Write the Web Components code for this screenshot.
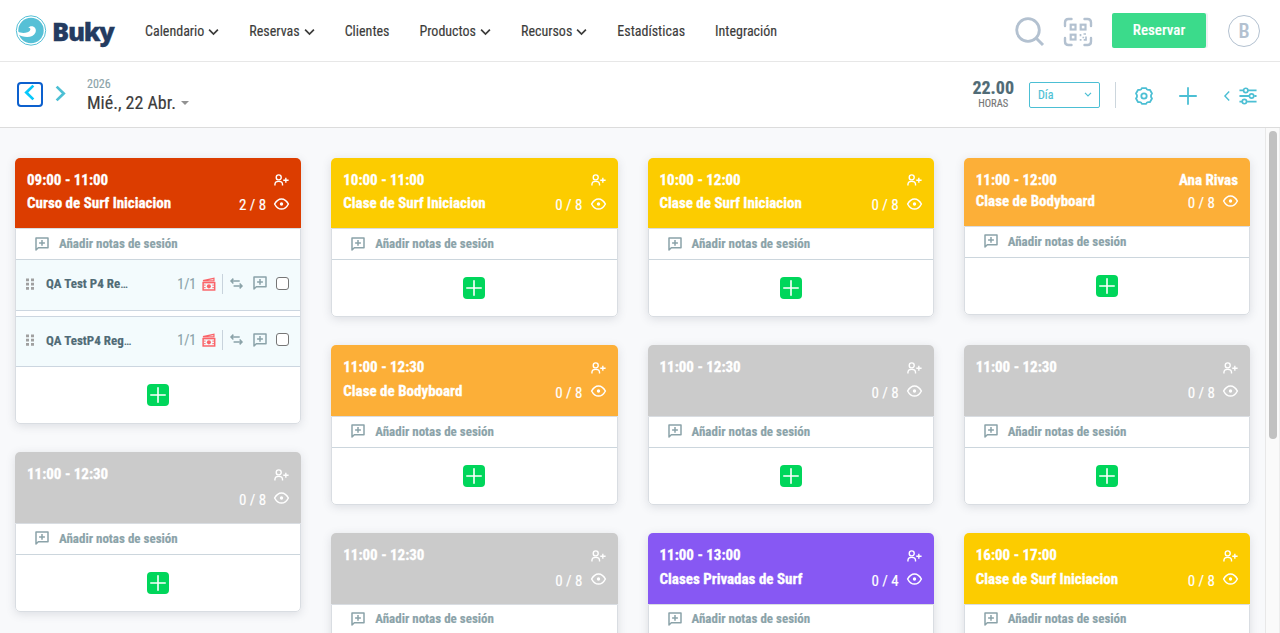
<!DOCTYPE html>
<html lang="es">
<head>
<meta charset="utf-8">
<title>Buky - Calendario</title>
<style>
  html, body { margin: 0; height: 100%; overflow: hidden; }
  body { font-family: "Roboto Condensed", Roboto, sans-serif; font-size: 14px; color: #3c3c3b; background: #f8f9fb; -webkit-text-stroke: .15px; }
</style>
</head>
<body>
<buky-app>
  <buky-header slot="header">
    <nav-item menu>Calendario</nav-item>
    <nav-item menu>Reservas</nav-item>
    <nav-item>Clientes</nav-item>
    <nav-item menu>Productos</nav-item>
    <nav-item menu>Recursos</nav-item>
    <nav-item>Estadísticas</nav-item>
    <nav-item>Integración</nav-item>
  </buky-header>
  <day-toolbar slot="toolbar" year="2026" horas="22.00">Mié., 22 Abr.</day-toolbar>

  <session-column>
    <session-card hora="09:00 - 11:00" plazas="2 / 8" color="#dc3d00" nombre="Curso de Surf Iniciacion">
      <booking-row pagos="1/1">QA Test P4 Re<span style="font-weight:400">…</span></booking-row>
      <booking-row pagos="1/1">QA TestP4 Reg<span style="font-weight:400">…</span></booking-row>
    </session-card>
    <session-card hora="11:00 - 12:30" plazas="0 / 8" color="#cbcbcb"></session-card>
  </session-column>

  <session-column>
    <session-card hora="10:00 - 11:00" plazas="0 / 8" color="#fccc00" nombre="Clase de Surf Iniciacion"></session-card>
    <session-card hora="11:00 - 12:30" plazas="0 / 8" color="#fcaf38" nombre="Clase de Bodyboard"></session-card>
    <session-card hora="11:00 - 12:30" plazas="0 / 8" color="#cbcbcb"></session-card>
  </session-column>

  <session-column>
    <session-card hora="10:00 - 12:00" plazas="0 / 8" color="#fccc00" nombre="Clase de Surf Iniciacion"></session-card>
    <session-card hora="11:00 - 12:30" plazas="0 / 8" color="#cbcbcb"></session-card>
    <session-card hora="11:00 - 13:00" plazas="0 / 4" color="#8758f3" nombre="Clases Privadas de Surf"></session-card>
  </session-column>

  <session-column>
    <session-card hora="11:00 - 12:00" plazas="0 / 8" color="#fcaf38" nombre="Clase de Bodyboard" monitor="Ana Rivas"></session-card>
    <session-card hora="11:00 - 12:30" plazas="0 / 8" color="#cbcbcb"></session-card>
    <session-card hora="16:00 - 17:00" plazas="0 / 8" color="#fccc00" nombre="Clase de Surf Iniciacion"></session-card>
  </session-column>
</buky-app>

<script>
// trazos de los iconos, todos heredan currentColor
const ICONOS = {
  chevron: ['0 0 12 8', '<path d="M1.200 1.500 6 6.200l4.800-4.700" stroke-width="1.900"/>'],
  prev: ['0 0 12 18', '<path d="M10.200 1.500 2.500 9l7.700 7.500" stroke-width="3"/>'],
  next: ['0 0 12 18', '<path d="M1.800 1.500 9.500 9l-7.700 7.500" stroke-width="3"/>'],
  plegar: ['0 0 6 10', '<path d="M5.200.5.900 5l4.300 4.500" stroke-width="1.400"/>'],
  buscar: ['0 0 30 30', '<circle cx="13" cy="13" r="11.300" stroke-width="2.800"/><path d="m21.500 21.500 6.500 6.500" stroke-width="3"/>'],
  qr: ['0 0 30 30', '<path d="M2 9V5.500Q2 2 5.500 2H8.500M21.500 2H24.500Q28 2 28 5.500V9M28 21V24.500Q28 28 24.500 28H21.500M8.500 28H5.500Q2 28 2 24.500V21" stroke-width="2.400" stroke-linecap="round"/><rect x="7.700" y="7.700" width="4.800" height="4.800" stroke-width="2.200"/><rect x="17.700" y="7.700" width="4.800" height="4.800" stroke-width="2.200"/><rect x="7.700" y="17.700" width="4.800" height="4.800" stroke-width="2.200"/><path d="M17.500 17v2.300M20.500 17h2.500M16.700 22.800h1.800M20.300 19.700v1.500M23 19.500v3.300h-2.300" stroke-width="1.700"/>'],
  ajustes: ['0 0 20 20', '<path d="M7.600 1.300h4.800q.4 1.800 2.100 2l2-.2 2.400 4.200q-1.200 1.200-1.200 2.700t1.200 2.700l-2.400 4.200-2-.2q-1.700.2-2.100 2H7.600q-.4-1.800-2.100-2l-2 .2-2.400-4.200q1.200-1.200 1.200-2.700T1.100 7.300l2.400-4.200 2 .2q1.700-.2 2.100-2z" stroke-width="2" stroke-linejoin="round"/><circle cx="10" cy="10" r="3" stroke-width="2"/>'],
  mas: ['0 0 20 20', '<path d="M10 1v18M1 10h18" stroke-width="2" stroke-linecap="round"/>'],
  filtros: ['0 0 20 20', '<path d="M.5 3.800h4.500M10 3.800h9.500M.5 10h11M17 10h2.500M.5 16.200h3M9 16.200h10.500" stroke-width="2"/><circle cx="7.500" cy="3.800" r="2.400" stroke-width="1.900"/><circle cx="14" cy="10" r="2.400" stroke-width="1.900"/><circle cx="6" cy="16.200" r="2.400" stroke-width="1.900"/>'],
  usuario: ['0 0 16 13', '<circle cx="5" cy="3.700" r="2.700" stroke-width="1.500"/><path d="M.9 12.400V11Q1 8 5 8T9.100 11v1.400M12.700 4v5.600M9.900 6.800h5.800" stroke-width="1.500"/>'],
  ojo: ['0 0 15 12', '<path d="M.6 6Q3.300.9 7.500.9T14.400 6Q11.700 11.100 7.500 11.100T.6 6z" stroke-width="1.500" stroke-linejoin="round"/><circle cx="7.500" cy="6" r="1.700" fill="currentColor" stroke="none"/>'],
  nota: ['0 0 14 14', '<path d="M1 13V1H13V10.800H3.300z" stroke-width="1.500" stroke-linejoin="round"/><path d="M7 3v5.800M4.100 5.900h5.800" stroke-width="1.500"/>'],
  pago: ['0 0 15 15', '<rect x="1.200" y="6" width="12.400" height="7.900" stroke-width="1.600"/><path d="M1 3.900 12.800 1.400v2.700H1" stroke-width="1.300"/><circle cx="7.400" cy="10" r="2.200" fill="currentColor" stroke="none"/><path d="M2 8.700h1.900M11 8.700h1.900M2 11.400h1.900M11 11.400h1.900" stroke-width="1"/>'],
  mover: ['0 0 14 12', '<path d="M3.600.7 1 3.300l2.600 2.600M1 3.300h9.500M10.400 6.100 13 8.700l-2.600 2.600M13 8.700H3.800" stroke-width="1.600"/>'],
  arrastre: ['0 0 8 12', '<path d="M0 .5h3v2.800H0zM5 .5h3v2.800H5zM0 4.700h3v2.800H0zM5 4.700h3v2.800H5zM0 8.900h3v2.800H0zM5 8.900h3v2.800H5z" fill="currentColor" stroke="none"/>']
};

class BukyIcon extends HTMLElement {
  constructor() {
    super();
    this.attachShadow({ mode: 'open' });
  }

  connectedCallback() {
    const [caja, trazos] = ICONOS[this.getAttribute('name')];
    this.shadowRoot.innerHTML = `
      <style>
        :host { display: block; flex: none; }
        svg { display: block; width: 100%; height: 100%; overflow: visible; }
      </style>
      <svg viewBox="${caja}" fill="none" stroke="currentColor">${trazos}</svg>
    `;
  }
}
customElements.define('buky-icon', BukyIcon);

class NavItem extends HTMLElement {
  constructor() {
    super();
    this.attachShadow({ mode: 'open' });
  }

  connectedCallback() {
    this.shadowRoot.innerHTML = `
      <style>
        :host { display: flex; align-items: center; gap: 4px; white-space: nowrap; line-height: 20px; }
        buky-icon { width: 11px; height: 8px; margin-top: 1px; }
      </style>
      <slot></slot>
      ${this.hasAttribute('menu') ? '<buky-icon name="chevron"></buky-icon>' : ''}
    `;
  }
}
customElements.define('nav-item', NavItem);

class BukyLogo extends HTMLElement {
  constructor() {
    super();
    this.attachShadow({ mode: 'open' });
    this.shadowRoot.innerHTML = `
      <style>
        :host { display: flex; align-items: center; gap: 5px; width: 99px; }
        svg { display: block; flex: none; width: 32px; height: 32px; }
        span { font: 800 25.500px/32px "Open Sans", sans-serif; color: #243b60; letter-spacing: -1.300px; -webkit-text-stroke: .3px #243b60; margin-top: 1px; }
      </style>
      <svg viewBox="0 0 32 32">
        <circle cx="16" cy="15.500" r="14.700" fill="#fff" stroke="#56c0d6" stroke-width="1"/>
        <circle cx="16" cy="15.500" r="12.700" fill="#56c0d6"/>
        <path fill="#fff" d="M2.800 16.500C5.500 18.200 9.500 18.400 12.500 17.200 15 16.200 15.800 14.400 15.200 13.400 14.800 12.700 14 12.500 13.200 12.900 14.200 11.400 16.300 10.700 18.200 11.500 20.600 12.500 21.500 15.200 20.500 17.500 19.200 20.500 15.800 22 12.200 22 8.500 22 5.500 21.300 3.200 19.300z"/>
      </svg>
      <span>Buky</span>
    `;
  }
}
customElements.define('buky-logo', BukyLogo);

class BukyHeader extends HTMLElement {
  constructor() {
    super();
    this.attachShadow({ mode: 'open' });
    this.shadowRoot.innerHTML = `
      <style>
        :host {
          display: flex; align-items: center; box-sizing: border-box; height: 62px;
          padding: 0 20px 0 15px; background: #fff; border-bottom: 1px solid #e7e7e7;
        }
        nav { display: flex; gap: 30px; margin-left: 31px; margin-top: 1px; }
        .acciones { display: flex; align-items: center; margin-left: auto; color: #b3c1d0; }
        .buscar { width: 30px; height: 30px; margin: 2px 18px 0 0; }
        .qr { width: 30px; height: 30px; margin: 2px 19px 0 0; }
        button {
          width: 94px; height: 35px; padding: 0 0 2px; border: 0; border-radius: 2px; margin-right: 22px;
          background: #3bdb8b; color: #fff; font: 500 15px "Roboto Condensed", sans-serif;
          box-shadow: 2px 0 0 #f0f0f3;
        }
        .avatar {
          box-sizing: border-box; width: 32px; height: 32px; border: 1px solid #b3c1d0; border-radius: 50%;
          font-size: 20px; line-height: 31px; text-align: center; font-weight: 500;
        }
      </style>
      <buky-logo></buky-logo>
      <nav><slot></slot></nav>
      <div class="acciones">
        <buky-icon class="buscar" name="buscar"></buky-icon>
        <buky-icon class="qr" name="qr"></buky-icon>
        <button>Reservar</button>
        <div class="avatar">B</div>
      </div>
    `;
  }
}
customElements.define('buky-header', BukyHeader);

class DayToolbar extends HTMLElement {
  constructor() {
    super();
    this.attachShadow({ mode: 'open' });
  }

  connectedCallback() {
    this.shadowRoot.innerHTML = `
      <style>
        :host {
          display: flex; align-items: center; box-sizing: border-box; height: 66px;
          padding: 0 23px 0 17px; background: #fff; border-bottom: 1px solid #dcdcdc; color: #4cbfd4;
        }
        .prev {
          display: flex; justify-content: center; box-sizing: border-box; width: 26px; height: 25px;
          border: 2px solid #0c60ce; border-radius: 4px; color: #05c8fb;
        }
        .prev buky-icon { width: 11px; height: 17px; margin-right: 1px; }
        .next { width: 11px; height: 17px; margin: -3px 0 0 12px; }
        .fecha { margin-left: 21px; line-height: 1; }
        .fecha small { display: block; font-size: 12px; line-height: 14px; color: #8ba3a9; }
        .dia { display: flex; align-items: center; gap: 5px; font-size: 18px; line-height: 21px; color: #3c3c3b; padding-top: 1px; margin-bottom: -1px; }
        .dia i { border: 4px solid transparent; border-top-color: #929292; border-bottom: 0; margin-top: 1px; }
        .derecha { display: flex; align-items: center; margin-left: auto; }
        .horas { text-align: center; color: #777; font-size: 10.500px; line-height: 12px; margin: -2px 15px 0 0; }
        .horas b { display: block; font-size: 18px; line-height: 19px; margin-bottom: 1px; color: #506b76; }
        .vista {
          display: flex; align-items: center; justify-content: space-between; box-sizing: border-box;
          width: 71px; height: 26px; padding: 0 7px 0 8px; border: 1px solid #4cbfd4; border-radius: 2px; font-size: 12px;
        }
        .vista buky-icon { width: 8px; height: 5px; }
        hr { width: 1px; height: 26px; margin: 0 19px 0 15px; border: 0; background: #ccd6dd; }
        .ico { width: 18px; height: 18px; margin-top: 2px; }
      </style>
      <div class="prev"><buky-icon name="prev"></buky-icon></div>
      <buky-icon class="next" name="next"></buky-icon>
      <div class="fecha">
        <small>${this.getAttribute('year')}</small>
        <div class="dia"><slot></slot><i></i></div>
      </div>
      <div class="derecha">
        <div class="horas"><b>${this.getAttribute('horas')}</b>HORAS</div>
        <div class="vista">Día <buky-icon name="chevron"></buky-icon></div>
        <hr>
        <buky-icon class="ico" name="ajustes"></buky-icon>
        <buky-icon class="ico" name="mas" style="margin-left:26px"></buky-icon>
        <buky-icon name="plegar" style="width:6px;height:10px;margin:3px 9px 0 27px"></buky-icon>
        <buky-icon class="ico" name="filtros"></buky-icon>
      </div>
    `;
  }
}
customElements.define('day-toolbar', DayToolbar);

class BookingRow extends HTMLElement {
  constructor() {
    super();
    this.attachShadow({ mode: 'open' });
  }

  connectedCallback() {
    this.shadowRoot.innerHTML = `
      <style>
        :host {
          display: flex; align-items: center; box-sizing: border-box; height: 51px; padding: 0 11px 3px 10px;
          background: #f3fbfd; border-bottom: 1px solid #ccd6e0; color: #8ba3a9;
        }
        .nombre { margin-left: 12px; font-size: 13px; font-weight: 700; color: #506b76; white-space: nowrap; }
        .derecha { display: flex; align-items: center; margin-left: auto; }
        hr { width: 1px; height: 20px; margin: 0 7px 0 6px; border: 0; background: #c8d3dc; }
        .check { box-sizing: border-box; width: 13px; height: 13px; border: 1px solid #767676; border-radius: 3px; background: #fff; margin: -1px 0 0 9px; }
      </style>
      <buky-icon name="arrastre" style="width:8px;height:12px;color:#a0a0a0"></buky-icon>
      <span class="nombre"><slot></slot></span>
      <div class="derecha">
        <span>${this.getAttribute('pagos')}</span>
        <buky-icon name="pago" style="width:14px;height:14px;margin-left:6px;color:#fa6469"></buky-icon>
        <hr>
        <buky-icon name="mover" style="width:13px;height:11px;margin-top:-1px"></buky-icon>
        <buky-icon name="nota" style="width:14px;height:14px;margin:-1px 0 0 10px"></buky-icon>
        <div class="check"></div>
      </div>
    `;
  }
}
customElements.define('booking-row', BookingRow);

class SessionCard extends HTMLElement {
  constructor() {
    super();
    this.attachShadow({ mode: 'open' });
  }

  connectedCallback() {
    const monitor = this.getAttribute('monitor');
    this.shadowRoot.innerHTML = `
      <style>
        :host { display: block; border-radius: 5px; background: #fff; box-shadow: 0 2px 10px rgba(60, 70, 90, .15); }
        :host([monitor]) { margin-bottom: 2.550px; }
        .cabecera {
          box-sizing: border-box; height: ${monitor ? 68 : 70.550}px; padding: 12px 12px 0; border-radius: 5px 5px 0 0;
          color: #fff; font-size: 15px; line-height: 20px;
        }
        b { -webkit-text-stroke: .3px; }
        .fila { display: flex; justify-content: space-between; height: ${monitor ? 21 : 23.500}px; white-space: nowrap; }
        .usuario { width: 15px; height: 12px; margin-top: 4.500px; }
        .plazas { display: flex; gap: 8px; margin-top: 2px; }
        .plazas buky-icon { width: 15px; height: 12px; margin-top: 2.500px; }
        .cuerpo { border: 1px solid #d9dde2; border-radius: 0 0 5px 5px; }
        .notas {
          display: flex; align-items: center; gap: 10px; box-sizing: border-box; height: 31px; padding: 0 0 1.400px 19px;
          border-bottom: 1px solid #ccd6dd; color: #8ba3a9; font-size: 13px; font-weight: 700;
        }
        .notas buky-icon { width: 14px; height: 14px; }
        ::slotted(booking-row:nth-child(n+2)) { margin-top: 5px; border-top: 1px solid #ccd6e0; }
        .pie { display: flex; justify-content: center; align-items: center; height: 56px; }
        .nuevo { display: flex; justify-content: center; align-items: center; width: 22px; height: 22px; border-radius: 4px; background: #00d65b; color: #fff; }
        .nuevo buky-icon { width: 16px; height: 16px; }
      </style>
      <div class="cabecera" style="background:${this.getAttribute('color')}">
        <div class="fila">
          <b>${this.getAttribute('hora')}</b>
          ${monitor ? `<b>${monitor}</b>` : '<buky-icon class="usuario" name="usuario"></buky-icon>'}
        </div>
        <div class="fila">
          <b>${this.getAttribute('nombre') || ''}</b>
          <div class="plazas"><span>${this.getAttribute('plazas')}</span><buky-icon name="ojo"></buky-icon></div>
        </div>
      </div>
      <div class="cuerpo">
        <div class="notas"><buky-icon name="nota"></buky-icon>Añadir notas de sesión</div>
        <slot></slot>
        <div class="pie"><div class="nuevo"><buky-icon name="mas"></buky-icon></div></div>
      </div>
    `;
  }
}
customElements.define('session-card', SessionCard);

class SessionColumn extends HTMLElement {
  constructor() {
    super();
    this.attachShadow({ mode: 'open' });
    this.shadowRoot.innerHTML = `
      <style>
        :host { display: flex; flex-direction: column; gap: 28.030px; min-width: 0; }
      </style>
      <slot></slot>
    `;
  }
}
customElements.define('session-column', SessionColumn);

class BukyApp extends HTMLElement {
  constructor() {
    super();
    this.attachShadow({ mode: 'open' });
    this.shadowRoot.innerHTML = `
      <style>
        :host { display: flex; flex-direction: column; height: 100vh; overflow: hidden; }
        main { display: flex; flex: 1; min-height: 0; }
        .rejilla {
          flex: 1; display: grid; grid-template-columns: repeat(4, 1fr); gap: 30px; align-items: start;
          padding: 29.900px 15px 0; overflow: hidden;
        }
        .barra { box-sizing: border-box; width: 15px; padding: 3px 3px 0; background: #fafafa; border-left: 1px solid #e8e8e8; border-right: 1px solid #ededed; }
        .barra div { width: 8px; height: 308px; border-radius: 4px; background: #c1c1c1; }
      </style>
      <slot name="header"></slot>
      <slot name="toolbar"></slot>
      <main>
        <div class="rejilla"><slot></slot></div>
        <div class="barra"><div></div></div>
      </main>
    `;
  }
}
customElements.define('buky-app', BukyApp);
</script>
</body>
</html>
